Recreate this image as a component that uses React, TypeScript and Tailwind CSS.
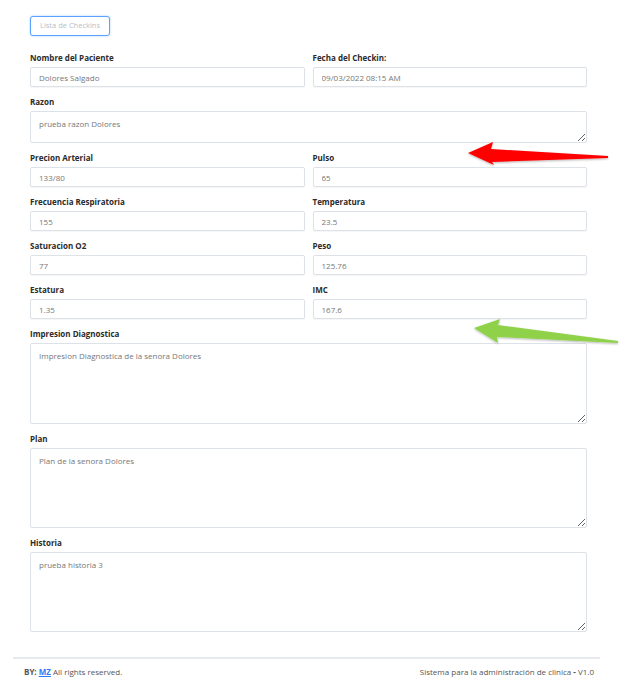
import React from "react";

const font = { fontFamily: '"Open Sans", "Noto Sans", sans-serif' };

function Field({ label, value }: { label: string; value: string }) {
  return (
    <div className="mb-[10px]">
      <div className="text-[8px] leading-[10px] font-bold text-[#2b2b2b] mb-[4px]">{label}</div>
      <input
        readOnly
        value={value}
        className="block w-full h-[20px] px-[8px] text-[8px] text-[#777] bg-white border-[1.5px] border-[#dde2e8] rounded-[2px] shadow-[0_1px_1px_rgba(0,0,0,0.04)] outline-none"
        style={font}
      />
    </div>
  );
}

function Area({ label, value, h }: { label: string; value: string; h: string }) {
  return (
    <div className="mb-[10px]">
      <div className="text-[8px] leading-[10px] font-bold text-[#2b2b2b] mb-[4px]">{label}</div>
      <textarea
        readOnly
        value={value}
        className={`block w-full ${h} px-[8px] py-[6px] text-[8px] text-[#777] bg-white border-[1.5px] border-[#dde2e8] rounded-[2px] outline-none`}
        style={font}
      />
    </div>
  );
}

export default function App() {
  return (
    <div className="relative w-[629px] h-[693px] bg-white overflow-hidden" style={font}>
      <div className="ml-[30px] w-[557px] pt-[16px]">
        <button className="block h-[20px] w-[80px] text-[7.5px] text-[#b8bec6] bg-white border-[1.5px] border-[#5aa2ff] rounded-[3px] shadow-[0_0_2px_rgba(90,162,255,0.6)]">
          Lista de Checkins
        </button>

        <div className="mt-[17px] grid grid-cols-2 gap-x-[8px]">
          <Field label="Nombre del Paciente" value="Dolores Salgado" />
          <Field label="Fecha del Checkin:" value="09/03/2022 08:15 AM" />
          <div className="col-span-2">
            <Area label="Razon" value="prueba razon Dolores" h="h-[32px]" />
          </div>
          <Field label="Precion Arterial" value="133/80" />
          <Field label="Pulso" value="65" />
          <Field label="Frecuencia Respiratoria" value="155" />
          <Field label="Temperatura" value="23.5" />
          <Field label="Saturacion O2" value="77" />
          <Field label="Peso" value="125.76" />
          <Field label="Estatura" value="1.35" />
          <Field label="IMC" value="167.6" />
          <div className="col-span-2">
            <Area label="Impresion Diagnostica" value="Impresion Diagnostica de la senora Dolores" h="h-[81px]" />
            <Area label="Plan" value="Plan de la senora Dolores" h="h-[80px]" />
            <Area label="Historia" value="prueba historia 3" h="h-[80px]" />
          </div>
        </div>
      </div>

      <div className="mt-[15px] ml-[13px] w-[587px] border-t-[2px] border-[#e6eaef]">
        <div className="flex justify-between items-center pl-[11px] pr-[6px] pt-[8px] text-[8px] leading-[10px] text-[#555]">
          <span>
            <span className="font-bold">BY: </span>
            <a className="font-bold text-[#2f7cf6] underline">MZ</a> All rights reserved.
          </span>
          <span>
            Sistema para la administración de clinica <span className="font-bold">-</span> V1.0
          </span>
        </div>
      </div>

      {/* annotation arrows */}
      <svg className="absolute inset-0 pointer-events-none" width="629" height="693">
        <defs>
          <filter id="sh" x="-10%" y="-50%" width="120%" height="200%">
            <feDropShadow dx="0" dy="1" stdDeviation="1" floodOpacity="0.3" />
          </filter>
        </defs>
        <polygon
          points="468,153 493,142 491,149 608,156 608,158 492,162 494,165"
          fill="#ff0000"
          filter="url(#sh)"
        />
        <polygon
          points="474,328 500,319 498,325 618,341 618,343 497,337 498,343"
          fill="#8fd24a"
          filter="url(#sh)"
        />
      </svg>
    </div>
  );
}
